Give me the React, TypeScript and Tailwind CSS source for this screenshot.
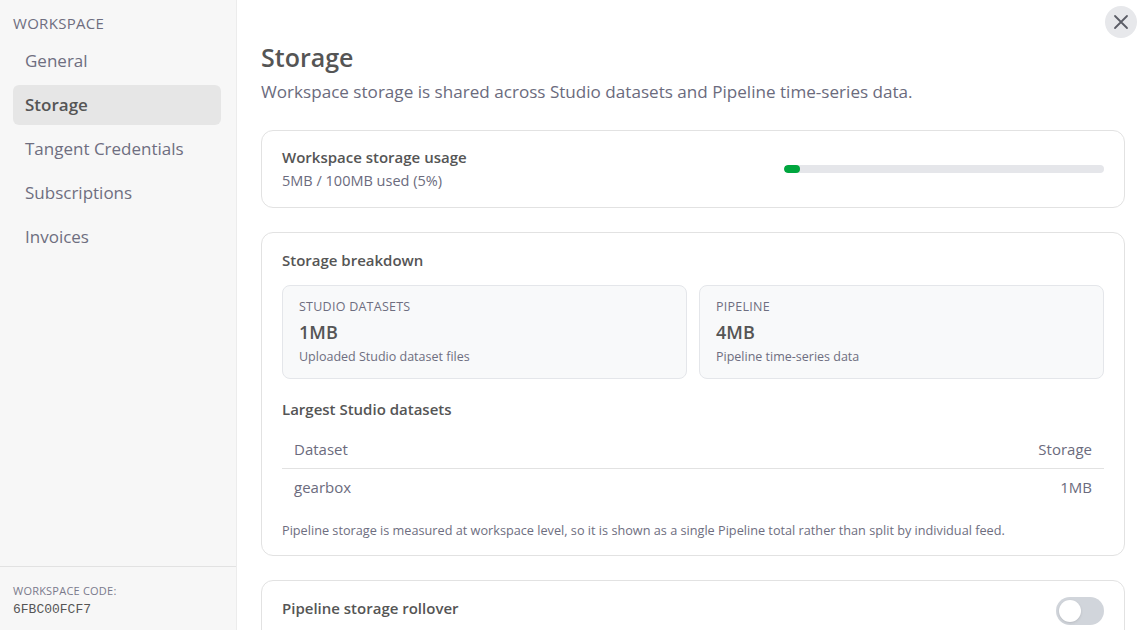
import React from 'react';

const navItems = ['General', 'Storage', 'Tangent Credentials', 'Subscriptions', 'Invoices'];

const Sidebar = () => {
  return (
    <aside className="w-[237px] shrink-0 h-full bg-[#f7f7f7] border-r border-[#ececec] flex flex-col">
      <div className="flex-1 px-[13px] pt-[14px]">
        <div className="text-[15px] leading-[18px] text-[#6e6e80] tracking-[0.02em]">WORKSPACE</div>
        <nav className="mt-[9px] flex flex-col gap-[4px]">
          {navItems.map((item) => (
            <div
              key={item}
              className={
                item === 'Storage'
                  ? 'w-[208px] h-[40px] flex items-center px-[12px] rounded-[6px] bg-[#e6e6e6] text-[17px] font-semibold text-[#555]'
                  : 'w-[208px] h-[40px] flex items-center px-[12px] rounded-[6px] text-[17px] text-[#6e6e80]'
              }
            >
              {item}
            </div>
          ))}
        </nav>
      </div>
      <div className="border-t border-[#e2e2e2] px-[13px] pt-[17px] pb-[10px] h-[64px]">
        <div className="text-[11px] leading-[14px] text-[#7a7a8c] tracking-[0.02em]">WORKSPACE CODE:</div>
        <div className="mt-[5px] text-[13px] leading-[14px] text-[#555] font-['Liberation_Mono',monospace]">6FBC00FCF7</div>
      </div>
    </aside>
  );
};

const Card = ({ children, className }: { children: React.ReactNode; className?: string }) => (
  <div className={'border border-[#e2e2e2] rounded-[12px] bg-white px-[20px] ' + (className || '')}>{children}</div>
);

export default function App() {
  return (
    <div className="w-[1145px] h-[630px] overflow-hidden flex bg-white font-['Open_Sans',sans-serif]">
      <Sidebar />
      <main className="relative flex-1 overflow-hidden pl-[24px] pr-[20px] pt-[41px]">
        <button className="absolute right-[8px] top-[6px] w-[32px] h-[32px] rounded-full bg-[#e7e8eb] flex items-center justify-center">
          <svg width="16" height="16" viewBox="0 0 16 16" fill="none" stroke="#5b5d66" strokeWidth="1.8" strokeLinecap="round">
            <path d="M2 2L14 14M14 2L2 14" />
          </svg>
        </button>
        <h1 className="text-[25px] leading-[32px] font-semibold text-[#555]">Storage</h1>
        <p className="mt-[6px] text-[17.1px] leading-[26px] text-[#6b6b7d]">
          Workspace storage is shared across Studio datasets and Pipeline time-series data.
        </p>

        <Card className="mt-[25px] h-[78px] flex items-center justify-between">
          <div>
            <div className="text-[15px] leading-[20px] font-semibold text-[#555]">Workspace storage usage</div>
            <div className="mt-[4px] text-[14.5px] leading-[20px] text-[#6b6b7d]">5MB / 100MB used (5%)</div>
          </div>
          <div className="w-[320px] h-[8px] rounded-full bg-[#e5e6ea] overflow-hidden">
            <div className="h-full rounded-full bg-[#00a63e]" style={{ width: '5%' }} />
          </div>
        </Card>

        <Card className="mt-[24px] pt-[17px] pb-[17px]">
          <div className="text-[15px] leading-[20px] font-semibold text-[#555]">Storage breakdown</div>
          <div className="mt-[15px] grid grid-cols-2 gap-[12px]">
            {[
              { label: 'STUDIO DATASETS', value: '1MB', desc: 'Uploaded Studio dataset files' },
              { label: 'PIPELINE', value: '4MB', desc: 'Pipeline time-series data' },
            ].map((b) => (
              <div key={b.label} className="h-[94px] rounded-[8px] border border-[#e4e6ea] bg-[#f8f9fa] px-[16px] pt-[13px]">
                <div className="text-[12.5px] leading-[16px] text-[#6e6e80] tracking-[0.02em]">{b.label}</div>
                <div className="mt-[5px] text-[18px] leading-[24px] font-semibold text-[#555]">{b.value}</div>
                <div className="mt-[5px] text-[12.5px] leading-[16px] text-[#6e6e80]">{b.desc}</div>
              </div>
            ))}
          </div>
          <div className="mt-[20px] text-[15px] leading-[20px] font-semibold text-[#555]">Largest Studio datasets</div>
          <div className="mt-[11px] text-[15px] text-[#6b6b7d]">
            <div className="h-[39px] flex items-center justify-between px-[12px] border-b border-[#e2e2e2]">
              <span>Dataset</span>
              <span>Storage</span>
            </div>
            <div className="h-[36px] flex items-center justify-between px-[12px]">
              <span>gearbox</span>
              <span>1MB</span>
            </div>
          </div>
          <p className="mt-[17px] text-[12.7px] leading-[16px] text-[#6e6e80]">
            Pipeline storage is measured at workspace level, so it is shown as a single Pipeline total rather than split by individual feed.
          </p>
        </Card>

        <Card className="mt-[24px] h-[80px] pt-[16px] flex items-start justify-between">
          <div className="text-[15px] leading-[20px] font-semibold text-[#555] mt-[1px]">Pipeline storage rollover</div>
          <div className="w-[48px] h-[28px] rounded-full bg-[#d1d5db] p-[3px] flex items-center">
            <div className="w-[22px] h-[22px] rounded-full bg-white shadow-sm" />
          </div>
        </Card>
      </main>
    </div>
  );
}
